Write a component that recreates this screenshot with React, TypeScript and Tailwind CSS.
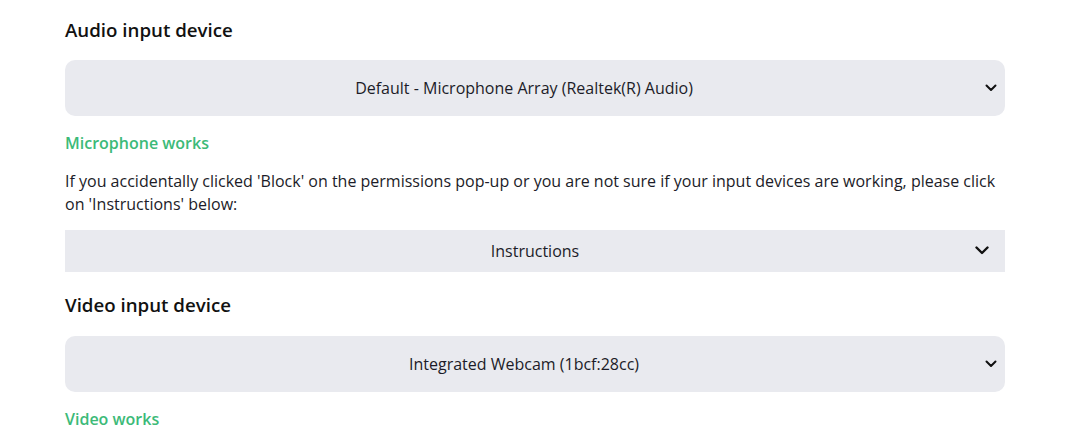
import React from 'react';

function SmallChevron() {
  return (
    <svg width="12" height="8" viewBox="0 0 12 8" fill="none" stroke="currentColor" strokeWidth="2" strokeLinecap="round" strokeLinejoin="round">
      <path d="M1.5 1.5L6 6l4.5-4.5" />
    </svg>
  );
}

function BigChevron() {
  return (
    <svg width="14" height="9" viewBox="0 0 14 9" fill="none" stroke="currentColor" strokeWidth="2.4" strokeLinecap="round" strokeLinejoin="round">
      <path d="M1.5 1.5L7 7l5.5-5.5" />
    </svg>
  );
}

function DeviceSelect({ label }: { label: string }) {
  return (
    <div className="relative flex h-[56px] items-center justify-center rounded-[10px] bg-[#e9eaef] pr-[22px] text-[16px] text-[#1c1c28]">
      <span>{label}</span>
      <span className="absolute right-[8px] top-[24px] text-[#111]">
        <SmallChevron />
      </span>
    </div>
  );
}

export default function App() {
  return (
    <div className="min-h-screen bg-white" style={{ fontFamily: '"Open Sans", "Noto Sans", sans-serif' }}>
      <div className="ml-[65px] w-[940px] pt-[16px]">
        <h2 className="text-[18.7px] font-semibold leading-[28px] text-[#111]">Audio input device</h2>
        <div className="mt-[16px]">
          <DeviceSelect label="Default - Microphone Array (Realtek(R) Audio)" />
        </div>
        <p className="mt-[16px] text-[16px] font-semibold leading-[22px] text-[#3cba78]">Microphone works</p>
        <p className="mt-[16px] text-[16px] leading-[23px] text-[#1c1c28]">
          If you accidentally clicked 'Block' on the permissions pop-up or you are not sure if your input devices are working, please click on 'Instructions' below:
        </p>
        <div className="relative mt-[14px] flex h-[42px] items-center justify-center bg-[#e9eaef] text-[16px] text-[#1c1c28]">
          <span>Instructions</span>
          <span className="absolute right-[16px] top-[16px] text-[#111]">
            <BigChevron />
          </span>
        </div>
        <h2 className="mt-[19px] text-[18.7px] font-semibold leading-[28px] text-[#111]">Video input device</h2>
        <div className="mt-[17px]">
          <DeviceSelect label="Integrated Webcam (1bcf:28cc)" />
        </div>
        <p className="mt-[16px] text-[16px] font-semibold leading-[22px] text-[#3cba78]">Video works</p>
      </div>
    </div>
  );
}
